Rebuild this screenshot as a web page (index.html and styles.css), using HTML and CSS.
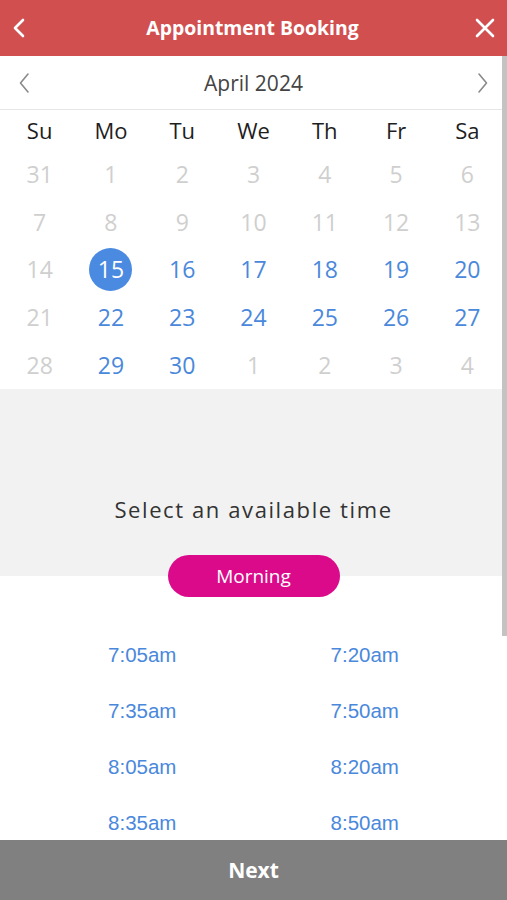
FILE: index.html
```html
<!DOCTYPE html>
<html lang="en">
<head>
<meta charset="utf-8">
<title>Appointment Booking</title>
<link rel="stylesheet" href="styles.css">
</head>
<body>
<div class="app">
  <header class="topbar">
    <button class="icon-btn" aria-label="Back">
      <svg width="14" height="20" viewBox="0 0 14 20"><path d="M11 2 L3 10 L11 18" fill="none" stroke="#fff" stroke-width="2.6" stroke-linecap="round" stroke-linejoin="round"/></svg>
    </button>
    <h1 class="title">Appointment Booking</h1>
    <button class="icon-btn close" aria-label="Close">
      <svg width="20" height="20" viewBox="0 0 20 20"><path d="M2 2 L18 18 M18 2 L2 18" fill="none" stroke="#fff" stroke-width="2.6" stroke-linecap="round"/></svg>
    </button>
  </header>

  <main class="scroll">
    <div class="month-bar">
      <button class="icon-btn" aria-label="Previous month">
        <svg width="12" height="22" viewBox="0 0 12 22"><path d="M10 2 L2.5 11 L10 20" fill="none" stroke="#8a8a8a" stroke-width="1.6" stroke-linecap="round" stroke-linejoin="round"/></svg>
      </button>
      <div class="month">April 2024</div>
      <button class="icon-btn" aria-label="Next month">
        <svg width="12" height="22" viewBox="0 0 12 22"><path d="M2 2 L9.5 11 L2 20" fill="none" stroke="#8a8a8a" stroke-width="1.6" stroke-linecap="round" stroke-linejoin="round"/></svg>
      </button>
    </div>

    <div class="calendar">
      <div class="dow">Su</div><div class="dow">Mo</div><div class="dow">Tu</div><div class="dow">We</div><div class="dow">Th</div><div class="dow">Fr</div><div class="dow">Sa</div>

      <div class="day off">31</div><div class="day off">1</div><div class="day off">2</div><div class="day off">3</div><div class="day off">4</div><div class="day off">5</div><div class="day off">6</div>
      <div class="day off">7</div><div class="day off">8</div><div class="day off">9</div><div class="day off">10</div><div class="day off">11</div><div class="day off">12</div><div class="day off">13</div>
      <div class="day off">14</div><div class="day"><span class="sel">15</span></div><div class="day">16</div><div class="day">17</div><div class="day">18</div><div class="day">19</div><div class="day">20</div>
      <div class="day off">21</div><div class="day">22</div><div class="day">23</div><div class="day">24</div><div class="day">25</div><div class="day">26</div><div class="day">27</div>
      <div class="day off">28</div><div class="day">29</div><div class="day">30</div><div class="day off">1</div><div class="day off">2</div><div class="day off">3</div><div class="day off">4</div>
    </div>

    <section class="time-head">
      <p class="time-title">Select an available time</p>
    </section>
    <div class="pill-wrap">
      <button class="pill">Morning</button>
    </div>

    <div class="times">
      <div class="time">7:05am</div><div class="time">7:20am</div>
      <div class="time">7:35am</div><div class="time">7:50am</div>
      <div class="time">8:05am</div><div class="time">8:20am</div>
      <div class="time">8:35am</div><div class="time">8:50am</div>
    </div>

    <div class="scroll-thumb"></div>
  </main>

  <footer class="footer">
    <button class="next">Next</button>
  </footer>
</div>
</body>
</html>
```

FILE: styles.css
```css
* { box-sizing: border-box; }

html, body {
  margin: 0;
  padding: 0;
  background: #fff;
}

body {
  font-family: "Open Sans", "Noto Sans", "DejaVu Sans", sans-serif;
}

.app {
  display: flex;
  flex-direction: column;
  height: 900px;
  width: 507px;
  overflow: hidden;
}

.icon-btn {
  background: none;
  border: 0;
  padding: 0;
  margin: 0;
  display: flex;
  align-items: center;
  justify-content: center;
  cursor: pointer;
}

.topbar {
  flex: 0 0 56px;
  background: #d24f50;
  display: grid;
  grid-template-columns: 40px 1fr 40px;
  align-items: center;
  padding: 0 12px 0 10px;
}

.topbar .icon-btn { justify-content: flex-start; height: 56px; padding-left: 2px; }
.topbar .close { justify-content: flex-end; }

.title {
  margin: 0;
  text-align: center;
  color: #fff;
  font-size: 19.4px;
  font-weight: 700;
  line-height: 56px;
}

.scroll {
  flex: 1 1 auto;
  overflow: hidden;
  position: relative;
}

.month-bar {
  height: 54px;
  display: grid;
  grid-template-columns: 44px 1fr 44px;
  align-items: center;
  border-bottom: 1px solid #e6e6e6;
  padding: 0 18px;
}

.month-bar .icon-btn:first-child { justify-content: flex-start; }
.month-bar .icon-btn:last-child { justify-content: flex-end; }

.month {
  text-align: center;
  font-size: 21px;
  color: #444;
}

.calendar {
  display: grid;
  grid-template-columns: repeat(7, 1fr);
  grid-template-rows: 40px repeat(5, 47.8px);
  padding: 0 4px;
}

.dow {
  display: flex;
  align-items: center;
  justify-content: center;
  font-size: 22px;
  color: #1e1e1e;
}

.day {
  display: flex;
  align-items: center;
  justify-content: center;
  font-size: 23px;
  color: #4a88dc;
}

.day.off { color: #cfcfcf; }

.sel {
  width: 43px;
  height: 43px;
  border-radius: 50%;
  background: #4a8ae0;
  color: #fff;
  display: flex;
  align-items: center;
  justify-content: center;
}

.time-head {
  background: #f2f2f2;
  padding-top: 104px;
  height: 166px;
}

.time-title {
  margin: 0;
  text-align: center;
  font-size: 22px;
  letter-spacing: 1.6px;
  color: #333;
  line-height: 32px;
}

.pill-wrap {
  display: flex;
  justify-content: center;
  background: linear-gradient(#f2f2f2 0 50%, #fff 50% 100%);
}

.pill {
  width: 172px;
  height: 42px;
  border: 0;
  border-radius: 21px;
  background: #da0a8b;
  color: #fff;
  font-family: "Open Sans", "Noto Sans", sans-serif;
  font-size: 19px;
  padding: 0;
}

.times {
  width: 445px;
  margin: 30px auto 0;
  display: grid;
  grid-template-columns: 1fr 1fr;
  grid-auto-rows: 56px;
}

.time {
  display: flex;
  align-items: center;
  justify-content: center;
  font-family: "Liberation Sans", Arial, sans-serif;
  font-size: 20.5px;
  color: #4a88dc;
}

.scroll-thumb {
  position: absolute;
  top: 0;
  right: 0;
  width: 5px;
  height: 580px;
  background: #c3c3c3;
}

.footer {
  flex: 0 0 60px;
  background: #808080;
  display: flex;
}

.next {
  flex: 1;
  border: 0;
  background: none;
  color: #fff;
  font-family: "Open Sans", "Noto Sans", sans-serif;
  font-weight: 700;
  font-size: 21px;
  padding: 0;
}
```
